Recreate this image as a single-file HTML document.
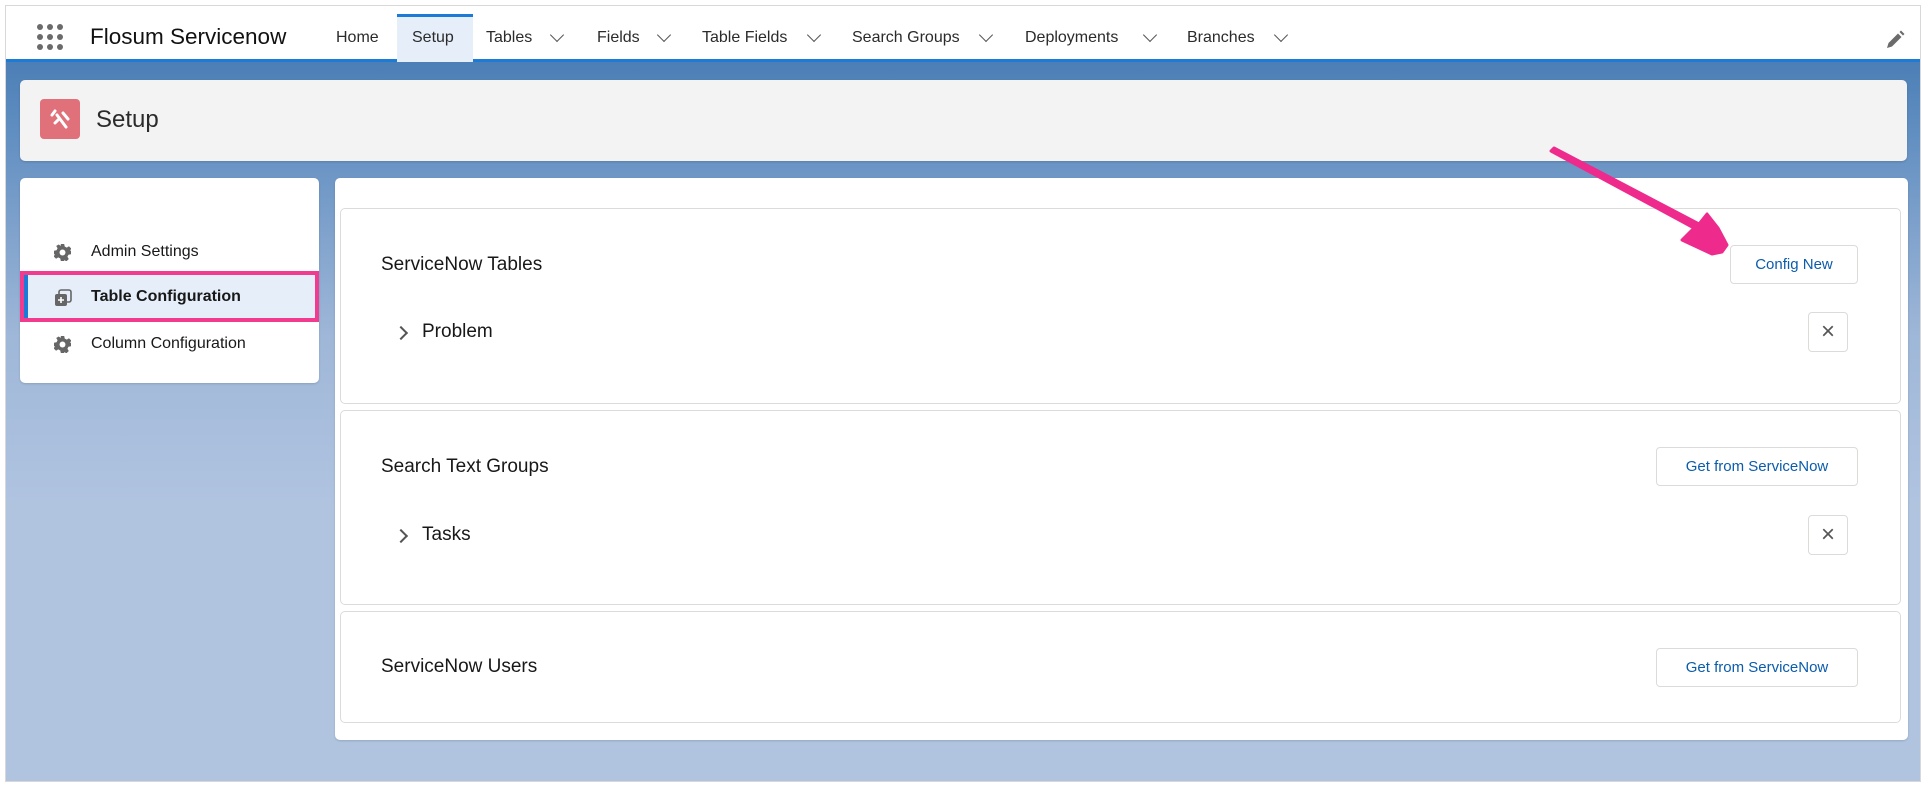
<!DOCTYPE html>
<html><head><meta charset="utf-8"><style>
*{box-sizing:border-box;margin:0;padding:0}
body{width:1926px;height:786px;background:#fff;font-family:"Liberation Sans",sans-serif;position:relative;overflow:hidden;color:#181818}
.frame{position:absolute;left:5px;top:5px;width:1916px;height:777px;border:1px solid #d8d8d8;background:linear-gradient(#3b72ad 0px,#5f8dc0 120px,#9fb7d8 330px,#b0c4e0 500px,#b0c4e0 100%);overflow:hidden}
.hdr{position:absolute;left:0;top:0;width:100%;height:56px;background:#fff;border-bottom:3px solid #1b7bd6}
.abs{position:absolute}
.nav{position:absolute;top:23px;font-size:16px;color:#2b2b2b}
.chev{position:absolute;top:24px;width:10px;height:10px;border-right:1.6px solid #555;border-bottom:1.6px solid #555;transform:rotate(45deg)}
.card{position:absolute;background:#fff;border-radius:5px;box-shadow:0 1px 2px rgba(0,0,0,.15)}
.sec{position:absolute;left:5px;right:7px;border:1px solid #dddbda;border-radius:5px;background:#fff}
.btn{position:absolute;border:1px solid #dddbda;border-radius:4px;background:#fff;color:#0b5cab;font-size:15px;text-align:center}
.xb{position:absolute;width:40px;height:40px;border:1px solid #dddbda;border-radius:4px;font-size:24px;color:#555;text-align:center;line-height:38px}
.title{position:absolute;left:40px;font-size:19px;color:#181818}
.rowchev{position:absolute;width:10px;height:10px;border-right:2px solid #555;border-top:2px solid #555;transform:rotate(45deg)}
.rowt{position:absolute;font-size:19px}
.mi{position:absolute;left:71px;font-size:16px;color:#181818}
</style></head><body>
<div class="frame">
<div class="hdr">
 <svg class="abs" style="left:30px;top:17px" width="28" height="28" viewBox="0 0 28 28" fill="#6b6b6b">
 <circle cx="4" cy="4" r="3"/><circle cx="14" cy="4" r="3"/><circle cx="24" cy="4" r="3"/>
 <circle cx="4" cy="14" r="3"/><circle cx="14" cy="14" r="3"/><circle cx="24" cy="14" r="3"/>
 <circle cx="4" cy="24" r="3"/><circle cx="14" cy="24" r="3"/><circle cx="24" cy="24" r="3"/></svg>
 <div class="abs" style="left:84px;top:18px;font-size:22.5px;color:#111">Flosum Servicenow</div>
 <div class="abs" style="left:391px;top:8px;width:76px;height:48px;background:#e5eef9;border-top:3px solid #1b7bd6"></div>
 <div class="nav" style="left:330px">Home</div>
 <div class="nav" style="left:406px">Setup</div>
 <div class="nav" style="left:480px">Tables</div><div class="chev" style="left:546px"></div>
 <div class="nav" style="left:591px">Fields</div><div class="chev" style="left:653px"></div>
 <div class="nav" style="left:696px">Table Fields</div><div class="chev" style="left:803px"></div>
 <div class="nav" style="left:846px">Search Groups</div><div class="chev" style="left:975px"></div>
 <div class="nav" style="left:1019px">Deployments</div><div class="chev" style="left:1139px"></div>
 <div class="nav" style="left:1181px">Branches</div><div class="chev" style="left:1270px"></div>
 <svg class="abs" style="left:1879px;top:24px" width="20" height="20" viewBox="0 0 20 20"><path d="M2 18 L3.5 13 L13 3.5 L16.5 7 L7 16.5 Z M14.5 2 L16 0.5 L19.5 4 L18 5.5 Z" fill="#6b6b6b"/></svg>
</div>
<div class="card" style="left:14px;top:74px;width:1887px;height:81px;background:#f3f3f3">
 <div class="abs" style="left:20px;top:19px;width:40px;height:40px;background:#e07079;border-radius:4px"></div>
 <svg class="abs" style="left:26px;top:25px" width="28" height="28" viewBox="0 0 28 28" fill="none" stroke="#fff" stroke-width="3" stroke-linecap="round"><path d="M9 6 L6 10 M11 10 L20 22 M12 15 L9 18 M17 8 L22 14"/></svg>
 <div class="abs" style="left:76px;top:26px;font-size:24px;color:#2b2b2b">Setup</div>
</div>
<div class="card" style="left:14px;top:172px;width:299px;height:205px">
 <svg class="abs" style="left:34px;top:66px" width="17" height="17" viewBox="0 0 20 20"><path fill="#666" d="M8 0h4l.6 3 2.4 1.2 2.6-1.6 2.8 2.8-1.6 2.6L20 8v4l-3 .6-1.2 2.4 1.6 2.6-2.8 2.8-2.6-1.6L12 17v3H8l-.6-3-2.4-1.2-2.6 1.6-2.8-2.8 1.6-2.6L0 12V8l3-.6 1.2-2.4-1.6-2.6L5.4.6 8 2.2z"/><circle cx="10" cy="10" r="3.5" fill="#fff"/></svg>
 <div class="mi" style="top:65px">Admin Settings</div>
 <div class="abs" style="left:0;top:93px;width:299px;height:51px;background:#e5eef9;border:4px solid #f13b8f"></div>
 <div class="abs" style="left:4px;top:97px;width:4px;height:43px;background:#1b7bd6"></div>
 <svg class="abs" style="left:34px;top:111px" width="18" height="18" viewBox="0 0 18 18"><rect x="5" y="1" width="12" height="12" rx="2" fill="none" stroke="#666" stroke-width="1.6"/><rect x="1" y="5" width="12" height="12" rx="2" fill="#666"/><path d="M7 8v6M4 11h6" stroke="#fff" stroke-width="1.6"/></svg>
 <div class="mi" style="top:110px;font-weight:bold">Table Configuration</div>
 <svg class="abs" style="left:34px;top:158px" width="17" height="17" viewBox="0 0 20 20"><path fill="#666" d="M8 0h4l.6 3 2.4 1.2 2.6-1.6 2.8 2.8-1.6 2.6L20 8v4l-3 .6-1.2 2.4 1.6 2.6-2.8 2.8-2.6-1.6L12 17v3H8l-.6-3-2.4-1.2-2.6 1.6-2.8-2.8 1.6-2.6L0 12V8l3-.6 1.2-2.4-1.6-2.6L5.4.6 8 2.2z"/><circle cx="10" cy="10" r="3.5" fill="#fff"/></svg>
 <div class="mi" style="top:157px">Column Configuration</div>
</div>
<div class="card" style="left:329px;top:172px;width:1573px;height:562px">
 <div class="sec" style="top:30px;height:196px">
  <div class="title" style="top:45px">ServiceNow Tables</div>
  <div class="btn" style="right:42px;top:36px;width:128px;height:39px;line-height:37px">Config New</div>
  <div class="rowchev" style="left:55px;top:119px"></div>
  <div class="rowt" style="left:81px;top:112px">Problem</div>
  <div class="xb" style="right:52px;top:103px">×</div>
 </div>
 <div class="sec" style="top:232px;height:195px">
  <div class="title" style="top:45px">Search Text Groups</div>
  <div class="btn" style="right:42px;top:36px;width:202px;height:39px;line-height:37px">Get from ServiceNow</div>
  <div class="rowchev" style="left:55px;top:120px"></div>
  <div class="rowt" style="left:81px;top:113px">Tasks</div>
  <div class="xb" style="right:52px;top:104px">×</div>
 </div>
 <div class="sec" style="top:433px;height:112px">
  <div class="title" style="top:44px">ServiceNow Users</div>
  <div class="btn" style="right:42px;top:36px;width:202px;height:39px;line-height:37px">Get from ServiceNow</div>
 </div>
</div>
</div>
<svg class="abs" style="left:0;top:0" width="1926" height="786"><path d="M1551 151 L1694 228 L1682 240 L1712 254 L1722 252 L1727 245 L1718 228 L1707 214 L1699 224 L1554 148 Z" fill="#ee2a8c" stroke="#ee2a8c" stroke-width="3" stroke-linejoin="round"/></svg>
</body></html>
